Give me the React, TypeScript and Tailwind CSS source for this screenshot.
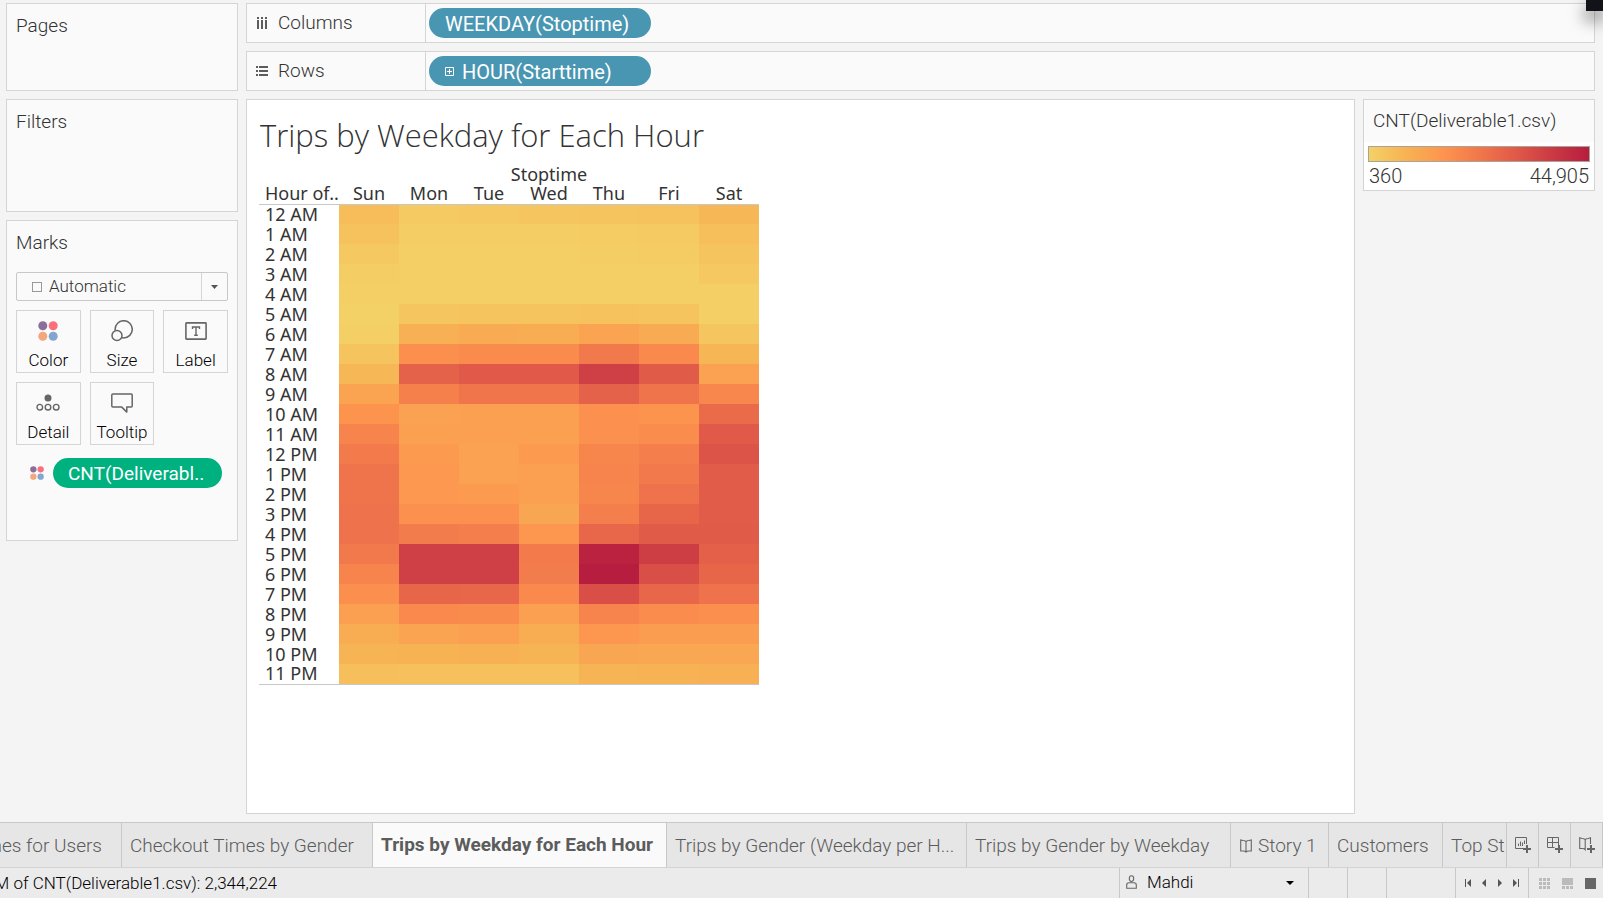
import React from "react";

type Rgb = [number, number, number];

const STOPS: [number, Rgb][] = [
  [0, [244, 209, 102]],
  [17, [247, 178, 84]],
  [34, [253, 148, 78]],
  [50, [241, 119, 75]],
  [66, [225, 91, 73]],
  [80, [206, 64, 69]],
  [100, [183, 29, 62]],
];

function heat(value: number): string {
  let i = 1;
  while (i < STOPS.length - 1 && value > STOPS[i][0]) i++;
  const [lo, a] = STOPS[i - 1];
  const [hi, b] = STOPS[i];
  const t = (value - lo) / (hi - lo);
  return `rgb(${a.map((c, k) => Math.round(c + (b[k] - c) * t)).join(",")})`;
}

const DAYS = ["Sun", "Mon", "Tue", "Wed", "Thu", "Fri", "Sat"];

const HOURS: [string, number[]][] = [
  ["12 AM", [11, 4, 5, 6, 7, 8, 14]],
  ["1 AM", [8, 2, 2, 2, 3, 4, 10]],
  ["2 AM", [5, 1, 1, 1, 2, 3, 7]],
  ["3 AM", [2, 1, 1, 1, 1, 1, 5]],
  ["4 AM", [1, 1, 1, 1, 1, 1, 1]],
  ["5 AM", [0, 6, 7, 7, 8, 7, 1]],
  ["6 AM", [1, 18, 21, 20, 25, 21, 6]],
  ["7 AM", [7, 37, 39, 39, 49, 40, 15]],
  ["8 AM", [14, 62, 67, 67, 80, 66, 26]],
  ["9 AM", [25, 45, 51, 51, 62, 52, 41]],
  ["10 AM", [34, 26, 28, 27, 36, 34, 57]],
  ["11 AM", [43, 27, 27, 27, 36, 38, 67]],
  ["12 PM", [48, 30, 26, 30, 42, 46, 70]],
  ["1 PM", [52, 32, 26, 27, 43, 49, 65]],
  ["2 PM", [52, 32, 30, 27, 42, 53, 65]],
  ["3 PM", [53, 36, 36, 24, 46, 60, 65]],
  ["4 PM", [53, 47, 46, 33, 59, 66, 66]],
  ["5 PM", [49, 80, 80, 48, 97, 82, 63]],
  ["6 PM", [43, 80, 80, 47, 100, 72, 60]],
  ["7 PM", [37, 60, 59, 40, 72, 59, 53]],
  ["8 PM", [28, 40, 39, 27, 43, 38, 37]],
  ["9 PM", [20, 25, 27, 20, 33, 29, 29]],
  ["10 PM", [16, 17, 18, 16, 24, 23, 23]],
  ["11 PM", [10, 9, 9, 9, 16, 17, 18]],
];

const ColorDots = ({ className }: { className: string }) => (
  <svg viewBox="0 0 20 20" className={className} aria-hidden="true">
    <circle cx="4.8" cy="4.8" r="4.5" fill="#8a6f9a" />
    <circle cx="15.2" cy="4.8" r="4.5" fill="#fb6f7d" />
    <circle cx="4.8" cy="15.2" r="4.5" fill="#f4a67c" />
    <circle cx="15.2" cy="15.2" r="4.5" fill="#83a6cf" />
  </svg>
);

const SizeIcon = () => (
  <svg viewBox="0 0 22 22" className="size-[22px]" fill="none" stroke="#666" strokeWidth="1.5" aria-hidden="true">
    <circle cx="12.7" cy="9.3" r="8.6" />
    <circle cx="6" cy="15.5" r="5" fill="#fafafa" />
  </svg>
);

const LabelIcon = () => (
  <svg viewBox="0 0 22 18" className="h-[18px] w-[22px]" fill="none" stroke="#666" aria-hidden="true">
    <rect x="0.9" y="0.9" width="20.2" height="16.2" rx="0.6" strokeWidth="1.6" />
    <path d="M7.5 7V5h7v2M11 5v8.3M9.2 13.3h3.6" strokeWidth="1.4" />
  </svg>
);

const DetailIcon = () => (
  <svg viewBox="0 0 24 18" className="h-[18px] w-6" fill="none" stroke="#666" strokeWidth="1.4" aria-hidden="true">
    <circle cx="12" cy="4" r="3.5" fill="#666" stroke="none" />
    <circle cx="3.8" cy="13.2" r="2.8" />
    <circle cx="12" cy="13.2" r="2.8" />
    <circle cx="20.2" cy="13.2" r="2.8" />
  </svg>
);

const TooltipIcon = () => (
  <svg viewBox="0 0 22 20" className="h-5 w-[22px]" fill="none" stroke="#666" strokeWidth="1.5" strokeLinejoin="round" aria-hidden="true">
    <path d="M1.8 0.9h18.4q1 0 1 1v11.2q0 1-1 1h-4.4v5l-5-5h-9q-1 0-1-1V1.9q0-1 1-1z" />
  </svg>
);

const ColumnsIcon = () => (
  <svg viewBox="0 0 12 12" className="size-3" fill="#5c5c5c" aria-hidden="true">
    <path d="M1 0h2v2H1zM5 0h2v2H5zM9 0h2v2H9zM1 3h2v9H1zM5 3h2v9H5zM9 3h2v9H9z" />
  </svg>
);

const RowsIcon = () => (
  <svg viewBox="0 0 12 12" className="size-3" fill="#5c5c5c" aria-hidden="true">
    <path d="M0 1h2v2H0zM0 5h2v2H0zM0 9h2v2H0zM3 1h9v2H3zM3 5h9v2H3zM3 9h9v2H3z" />
  </svg>
);

const BookIcon = () => (
  <svg viewBox="0 0 12 14" className="h-3.5 w-3" fill="none" stroke="#666" strokeWidth="1.1" aria-hidden="true">
    <path d="M6 2.6Q5 1.5 3 1.5L.7 1v11h2.8q1.5 0 2.5 1 1-1 2.5-1h2.8V1L9 1.5Q7 1.5 6 2.6zM6 2.6V13" />
  </svg>
);

const NewSheetIcon = () => (
  <svg viewBox="0 0 16 16" className="size-4" fill="none" stroke="#666" aria-hidden="true">
    <path d="M8 11.5H.5V.5h11V7" />
    <path d="M3.5 9V6.5M5.5 9V4.5M7.5 9V5.5M9.5 7V3.5" />
    <path d="M12 8v8M8 12h8" strokeWidth="2" />
  </svg>
);

const NewDashboardIcon = () => (
  <svg viewBox="0 0 16 16" className="size-4" fill="none" stroke="#666" aria-hidden="true">
    <path d="M7.5 10.5H.5V.5h11V8M.5 5.5h11M5.5.5v10" />
    <path d="M12 8v8M8 12h8" strokeWidth="2" />
  </svg>
);

const NewStoryIcon = () => (
  <svg viewBox="0 0 16 16" className="size-4" fill="none" stroke="#666" aria-hidden="true">
    <path d="M6.2 2.6Q5 1.5 3 1.5L.7.8v10.7h2.6q1.9 0 2.9 1.2V2.6Q7.2 1.5 9.4 1.5L11.5.8V7" strokeWidth="1.1" />
    <path d="M12 8v8M8 12h8" strokeWidth="2" />
  </svg>
);

const MARKS = [
  { label: "Color", icon: <ColorDots className="size-5" /> },
  { label: "Size", icon: <SizeIcon /> },
  { label: "Label", icon: <LabelIcon /> },
  { label: "Detail", icon: <DetailIcon /> },
  { label: "Tooltip", icon: <TooltipIcon /> },
];

const TABS = [
  { label: "Checkout Times for Users", box: "w-[122px] justify-end pr-[19px] shrink-0" },
  { label: "Checkout Times by Gender", box: "w-[251px] pl-2 shrink-0" },
  { label: "Trips by Weekday for Each Hour", box: "w-[294px] pl-2 shrink-0", active: true },
  { label: "Trips by Gender (Weekday per H...", box: "w-[300px] pl-2 shrink-0" },
  { label: "Trips by Gender by Weekday", box: "w-[264px] pl-2 shrink-0" },
  { label: "Story 1", box: "w-[98px] gap-1.5 pl-[9px] shrink-0", icon: <BookIcon /> },
  { label: "Customers", box: "w-[114px] pl-2 shrink-0" },
  { label: "Top St", box: "min-w-0 flex-1 pl-2" },
];

const card = "border border-[#d4d4d4] bg-[#fafafa]";
const cardTitle = "pl-[9px] text-[19px] leading-[43px] font-light text-[#333]";

function Shelf({ icon, name, children }: { icon: React.ReactNode; name: string; children: React.ReactNode }) {
  return (
    <div className={`${card} flex h-10`}>
      <h2 className="flex w-[179px] shrink-0 items-center gap-2.5 border-r border-[#d4d4d4] pl-[9px] text-[19px] leading-10 font-light text-[#333]">
        {icon}
        {name}
      </h2>
      <div className="flex items-center pl-[3px]">{children}</div>
    </div>
  );
}

function NavButton({ label, path }: { label: string; path: string }) {
  return (
    <button aria-label={label} className="flex w-4 justify-center">
      <svg viewBox="0 0 8 10" className="h-2.5 w-2" fill="#555" aria-hidden="true">
        <path d={path} />
      </svg>
    </button>
  );
}

export default function App() {
  return (
    <div className="relative flex min-h-screen flex-col overflow-hidden bg-[#f4f4f4] font-['Roboto','Liberation_Sans',sans-serif] text-[#333]">
      <main className="flex flex-1 gap-2 pt-[3px] pr-2 pb-2 pl-1.5">
        <aside className="flex w-58 shrink-0 flex-col gap-2">
          <section className={`${card} h-22`}>
            <h2 className={cardTitle}>Pages</h2>
          </section>
          <section className={`${card} h-[113px]`}>
            <h2 className={cardTitle}>Filters</h2>
          </section>
          <section className={`${card} h-[321px]`}>
            <h2 className={cardTitle}>Marks</h2>
            <div className="px-[9px] pt-2">
              <div className="flex h-[29px] items-center rounded-[2px] border border-[#c8c8c8]">
                <span className="ml-[15px] size-2.5 shrink-0 border border-[#999]" />
                <select
                  aria-label="Mark type"
                  className="h-full min-w-0 flex-1 appearance-none bg-transparent pl-[7px] text-[17px] leading-[27px] font-light text-[#333]"
                >
                  <option>Automatic</option>
                </select>
                <span className="flex h-full w-[26px] items-center justify-center border-l border-[#d4d4d4]">
                  <svg viewBox="0 0 8 4" className="h-1 w-2" fill="#555" aria-hidden="true">
                    <path d="M0 0h7L3.5 4z" />
                  </svg>
                </span>
              </div>
              <div className="mt-[9px] grid grid-cols-3 gap-[9px]">
                {MARKS.map((m) => (
                  <button
                    key={m.label}
                    className="flex h-[63px] flex-col items-center border border-[#d4d4d4] text-[17px] leading-6 font-light text-black"
                  >
                    <span className="flex h-[37px] items-center pt-0.5">{m.icon}</span>
                    {m.label}
                  </button>
                ))}
              </div>
              <div className="mt-[13px] flex items-center gap-[9px] pl-3.5">
                <ColorDots className="size-3.5" />
                <button className="h-[30px] w-[169px] rounded-full bg-[#00b180] pt-0.5 pl-[15px] text-left text-[19px] leading-7 text-white">
                  CNT(Deliverabl..
                </button>
              </div>
            </div>
          </section>
        </aside>

        <div className="flex min-w-0 flex-1 flex-col gap-2">
          <Shelf icon={<ColumnsIcon />} name="Columns">
            <button className="h-[30px] w-[222px] rounded-full bg-[#4996b2] pt-0.5 pl-4 text-left text-[20px] leading-7 text-white">
              WEEKDAY(Stoptime)
            </button>
          </Shelf>
          <Shelf icon={<RowsIcon />} name="Rows">
            <button className="flex h-[30px] w-[222px] items-center gap-2 rounded-full bg-[#4996b2] pt-0.5 pl-4 text-[20px] leading-7 text-white">
              <svg viewBox="0 0 9 9" className="mb-0.5 size-[9px]" fill="none" stroke="currentColor" aria-hidden="true">
                <path d="M.5.5h8v8h-8zM4.5 2v5M2 4.5h5" />
              </svg>
              HOUR(Starttime)
            </button>
          </Shelf>

          <div className="flex flex-1 gap-2">
            <section className="min-w-0 flex-1 border border-[#d4d4d4] bg-white px-3 pt-3">
              <h1 className="mb-1.5 pl-px font-['Open_Sans',sans-serif] text-[31px] leading-[46px] font-light">
                Trips by Weekday for Each Hour
              </h1>
              <table className="w-[500px] table-fixed border-b border-[#c8c8c8] font-['Noto_Sans',sans-serif] text-[18px] leading-[19px]">
                <colgroup>
                  <col className="w-20" />
                  <col span={7} className="w-15" />
                </colgroup>
                <thead>
                  <tr className="h-5">
                    <td />
                    <th colSpan={7} className="p-0 font-normal">Stoptime</th>
                  </tr>
                  <tr className="h-5 border-b border-[#c8c8c8]">
                    <th className="p-0 pl-1.5 text-left font-normal whitespace-nowrap">Hour of..</th>
                    {DAYS.map((d) => (
                      <th key={d} className="p-0 font-normal">{d}</th>
                    ))}
                  </tr>
                </thead>
                <tbody>
                  {HOURS.map(([hour, values]) => (
                    <tr key={hour} className="h-5">
                      <th className="p-0 pl-1.5 text-left font-normal whitespace-nowrap">{hour}</th>
                      {values.map((v, i) => (
                        <td key={DAYS[i]} className="p-0" style={{ backgroundColor: heat(v) }} />
                      ))}
                    </tr>
                  ))}
                </tbody>
              </table>
            </section>

            <aside className="w-58 shrink-0">
              <section className="border border-[#d4d4d4] bg-white">
                <h2 className="bg-[#fafafa] pl-[9px] text-[19px] leading-[42px] font-light">CNT(Deliverable1.csv)</h2>
                <div className="px-1 pt-1">
                  <div className="h-4 border border-[#a8a49a] bg-[linear-gradient(to_right,#f4d166_0%,#f7b254_17%,#fd944e_34%,#f1774b_50%,#e15b49_66%,#ce4045_80%,#b71d3e_100%)]" />
                  <div className="flex justify-between px-px pt-px text-[20px] leading-[27px] font-light">
                    <span>360</span>
                    <span>44,905</span>
                  </div>
                </div>
              </section>
            </aside>
          </div>
        </div>
      </main>

      <nav className="flex h-[45px] border-t border-[#c8c8c8] bg-[#e6e6e6]">
        {TABS.map((t) => (
          <button
            key={t.label}
            className={`flex items-center overflow-hidden border-r border-[#c8c8c8] text-[19px] whitespace-nowrap text-[#5c5c5c] ${t.box} ${
              t.active ? "bg-[#fafafa] font-bold" : "pt-0.5 font-light"
            }`}
          >
            {t.icon}
            {t.label}
          </button>
        ))}
        <button aria-label="New Worksheet" className="flex w-8 shrink-0 items-center justify-center border-r border-[#c8c8c8]">
          <NewSheetIcon />
        </button>
        <button aria-label="New Dashboard" className="flex w-8 shrink-0 items-center justify-center border-r border-[#c8c8c8]">
          <NewDashboardIcon />
        </button>
        <button aria-label="New Story" className="flex w-8 shrink-0 items-center justify-center border-r border-[#c8c8c8]">
          <NewStoryIcon />
        </button>
      </nav>

      <footer className="flex h-[31px] border-t border-[#d4d4d4] bg-[#ebebeb] text-[17px] text-black">
        <div className="flex w-[277px] items-center justify-end overflow-hidden pt-0.5 font-light whitespace-nowrap">
          SUM of CNT(Deliverable1.csv): 2,344,224
        </div>
        <div className="ml-auto flex w-[190px] items-center border-x border-[#c8c8c8] pl-1.5">
          <svg viewBox="0 0 11 14" className="mb-0.5 h-3.5 w-[11px]" fill="none" stroke="#666" strokeWidth="1.1" aria-hidden="true">
            <ellipse cx="5.5" cy="3.6" rx="2.2" ry="2.9" />
            <path d="M.7 13.2V10q0-2.2 2.3-2.2h5q2.3 0 2.3 2.2v3.2z" />
          </svg>
          <select aria-label="User" className="h-full min-w-0 flex-1 appearance-none bg-transparent pl-2.5 text-[17px] font-light">
            <option>Mahdi</option>
          </select>
          <svg viewBox="0 0 8 4" className="mr-3.5 h-1 w-2" aria-hidden="true">
            <path d="M0 0h8L4 4z" />
          </svg>
        </div>
        <div className="w-[39px] border-r border-[#c8c8c8]" />
        <div className="w-[39px] border-r border-[#c8c8c8]" />
        <div className="w-[69px] border-r border-[#c8c8c8]" />
        <div className="flex w-[73px] items-center border-r border-[#c8c8c8] pl-1">
          <NavButton label="First sheet" path="M1 1h1v8H1zM7 1v8L3 5z" />
          <NavButton label="Previous sheet" path="M6 1v8L2 5z" />
          <NavButton label="Next sheet" path="M2 1v8l4-4z" />
          <NavButton label="Last sheet" path="M1 1v8l4-4zM6 1h1v8H6z" />
        </div>
        <div className="flex w-[74px] items-center gap-3 pl-2.5">
          <button aria-label="Show sheet sorter">
            <svg viewBox="0 0 11 11" className="size-[11px]" fill="#bbb" aria-hidden="true">
              <path d="M0 0h3v3H0zM4 0h3v3H4zM8 0h3v3H8zM0 4h3v3H0zM4 4h3v3H4zM8 4h3v3H8zM0 8h3v3H0zM4 8h3v3H4zM8 8h3v3H8z" />
            </svg>
          </button>
          <button aria-label="Show filmstrip">
            <svg viewBox="0 0 11 11" className="size-[11px]" fill="#bbb" aria-hidden="true">
              <path d="M0 0h11v7H0zM0 8h3v3H0zM4 8h3v3H4zM8 8h3v3H8z" />
            </svg>
          </button>
          <button aria-label="Show tabs" className="size-[11px] bg-[#666]" />
        </div>
      </footer>

      <div className="absolute top-0 right-0 h-[11px] w-[17px] bg-[#111318] shadow-[0_8px_16px_2px_rgba(0,0,0,0.4)]" />
    </div>
  );
}
